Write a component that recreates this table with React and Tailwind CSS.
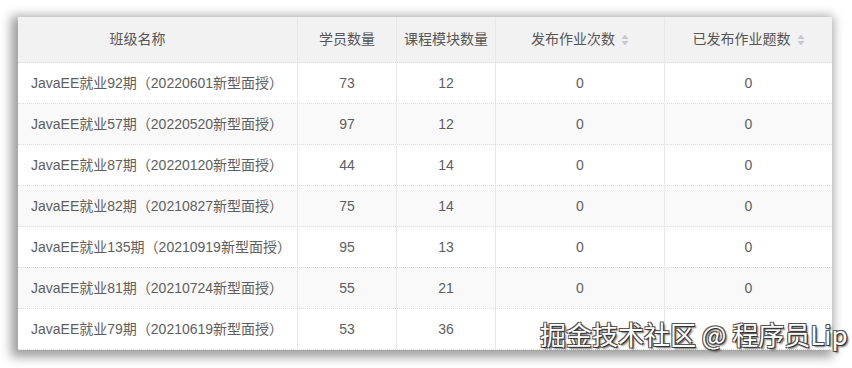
import React from "react";

const rows = [
  ["JavaEE就业92期（20220601新型面授）", 73, 12, 0, 0],
  ["JavaEE就业57期（20220520新型面授）", 97, 12, 0, 0],
  ["JavaEE就业87期（20220120新型面授）", 44, 14, 0, 0],
  ["JavaEE就业82期（20210827新型面授）", 75, 14, 0, 0],
  ["JavaEE就业135期（20210919新型面授）", 95, 13, 0, 0],
  ["JavaEE就业81期（20210724新型面授）", 55, 21, 0, 0],
  ["JavaEE就业79期（20210619新型面授）", 53, 36, 0, 0],
];

const cols = "grid grid-cols-[280px_99px_99px_169px_167px]";

// little up/down caret after sortable headers
const SortIcon = () => (
  <svg width="8" height="12" viewBox="0 0 8 12" className="ml-[6px] shrink-0">
    <path d="M4 0.5 L7.5 5 L0.5 5 Z" fill="#c6c9cf" />
    <path d="M4 11.5 L7.5 7 L0.5 7 Z" fill="#c6c9cf" />
  </svg>
);

const Cell = ({ children, className = "" }) => (
  <div
    className={`flex items-center border-r border-[#e8e8e8] last:border-r-0 ${className}`}
  >
    {children}
  </div>
);

export default function App() {
  return (
    <div
      className="relative w-[852px] h-[368px] bg-white overflow-hidden pt-[17px] pl-[18px]"
      style={{ fontFamily: '"Liberation Sans", "Noto Sans CJK SC", sans-serif' }}
    >
      {/* card */}
      <div className="w-[814px] h-[333px] bg-white overflow-hidden shadow-[-3px_3px_10px_4px_rgba(0,0,0,0.38)] text-[14px] text-[#5e5e5e]">
        {/* header */}
        <div className={`${cols} h-[46px] bg-[#f2f2f2] border-b border-dotted border-[#dcdcdc] text-[#555]`}>
          <Cell className="justify-center pr-10">班级名称</Cell>
          <Cell className="justify-center">学员数量</Cell>
          <Cell className="justify-center">课程模块数量</Cell>
          <Cell className="justify-center">
            发布作业次数
            <SortIcon />
          </Cell>
          <Cell className="justify-center">
            已发布作业题数
            <SortIcon />
          </Cell>
        </div>

        {/* body */}
        {rows.map((r, i) => (
          <div
            key={i}
            className={`${cols} h-[41px] border-b border-dotted border-[#dcdcdc] ${
              i % 2 === 1 ? "bg-[#f9f9f9]" : "bg-white"
            }`}
          >
            <Cell className="pl-[13px]">{r[0]}</Cell>
            <Cell className="justify-center">{r[1]}</Cell>
            <Cell className="justify-center">{r[2]}</Cell>
            <Cell className="justify-center">{r[3]}</Cell>
            <Cell className="justify-center">{r[4]}</Cell>
          </div>
        ))}
      </div>

      {/* watermark */}
      <div
        className="absolute left-[540px] top-[316px] text-[26px] leading-[36px] text-white whitespace-nowrap"
        style={{
          fontFamily: '"Noto Sans CJK SC", "Liberation Sans", sans-serif',
          textShadow:
            "1px 1px 0 #333, -1px -1px 0 #555, 1px -1px 0 #555, -1px 1px 0 #555, 2px 2px 2px rgba(0,0,0,0.6)",
        }}
      >
        掘金技术社区 @ 程序员Lip
      </div>
    </div>
  );
}
